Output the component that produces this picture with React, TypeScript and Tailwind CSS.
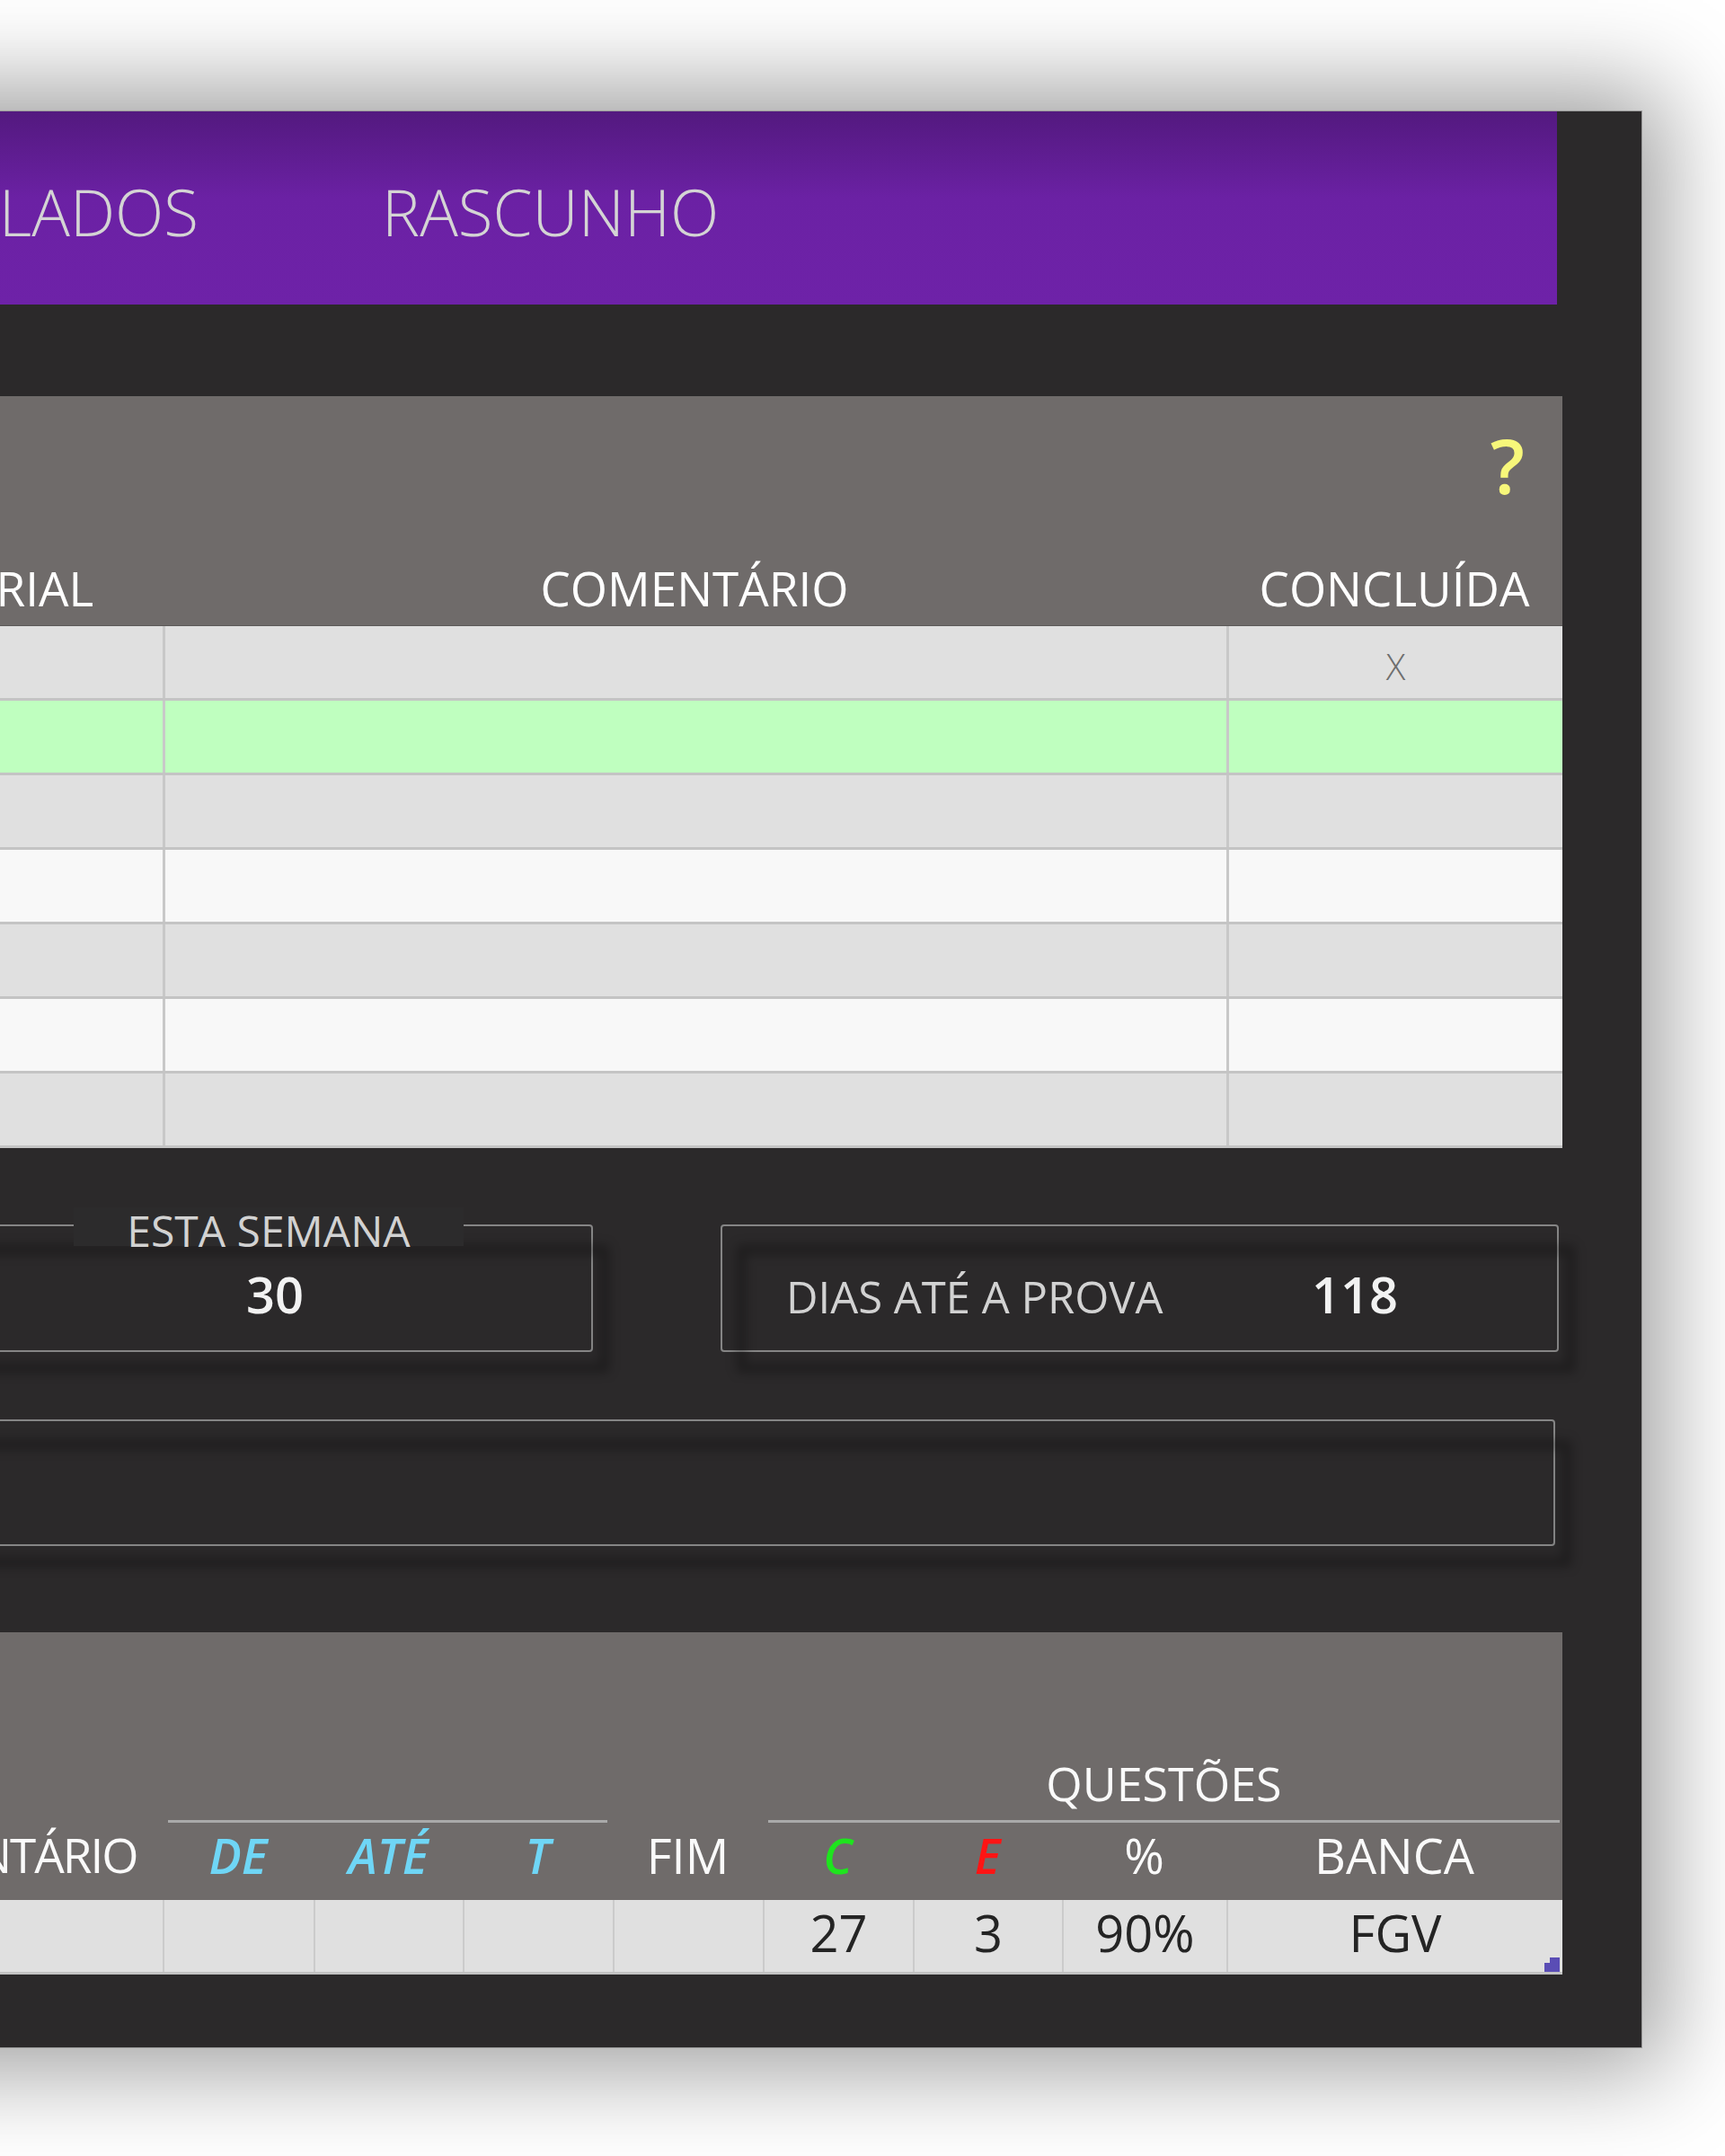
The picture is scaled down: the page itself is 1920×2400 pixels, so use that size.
import React from 'react';

const rowColors = [
  'bg-[#e0e0e0]',
  'bg-[#bfffbf]',
  'bg-[#e0e0e0]',
  'bg-[#f8f8f8]',
  'bg-[#e0e0e0]',
  'bg-[#f8f8f8]',
  'bg-[#e0e0e0]',
];

const tasksCols = 'grid grid-cols-[1fr_402px_1184px_374px]';
const logCols = 'grid grid-cols-[1fr_394px_168px_166px_167px_167px_167px_166px_183px_374px]';

// blurred outline that sits down-right of a framed box
const ShadowFrame: React.FC = () => (
  <div
    aria-hidden
    className="pointer-events-none absolute -inset-[2px] translate-x-[18px] translate-y-[23px] rounded-[4px] border-[10px] border-black/30 blur-[6px]"
  />
);

const App: React.FC = () => {
  return (
    <div className="h-[2400px] w-[1920px] overflow-hidden bg-white pt-[123px] font-['Open_Sans','Noto_Sans',sans-serif]">
      <div className="ml-[-700px] flex w-[2528px] flex-col border-t border-r border-b border-[#9a9a9a] bg-[#2b292a] pb-[81px] shadow-[0_0_100px_25px_rgba(0,0,0,0.38)]">
        {/* tabs */}
        <div className="mr-[94px] flex h-[215px] bg-linear-to-b from-[#53197f] via-[#6b21a4] via-45% to-[#6e22a8] pt-[76px] text-[71px] font-light leading-none text-[#d4d4d4]">
          <div className="w-[921px] text-right">SIMULADOS</div>
          <div className="ml-[204px]">RASCUNHO</div>
        </div>

        {/* tasks */}
        <div className="mr-[88px] mt-[102px] bg-[#6f6b6a]">
          <div className="flex justify-end pr-[42px] pt-[35px]">
            <span className="text-[84px] font-semibold leading-none text-[#f7f77a]">?</span>
          </div>
          <div className={`${tasksCols} pt-[68px] pb-[15px] text-center text-[53px] leading-none text-white`}>
            <div>DISCIPLINA</div>
            <div>MATERIAL</div>
            <div>COMENTÁRIO</div>
            <div>CONCLUÍDA</div>
          </div>
          <div className="border-t border-[#5d5a59]">
            {rowColors.map((bg, i) => (
              <div key={i} className={`${tasksCols} h-[83px] border-b-[3px] border-[#c4c4c4] ${bg}`}>
                <div />
                <div className="border-l-[3px] border-[#c8c8c8]" />
                <div className="border-l-[3px] border-[#c8c8c8]" />
                <div className="flex items-center justify-center border-l-[3px] border-[#c8c8c8] pt-[10px] text-[40px] font-light leading-none text-[#6e6e6e]">
                  {i === 0 ? 'X' : ''}
                </div>
              </div>
            ))}
          </div>
        </div>

        {/* counters */}
        <div className="mt-[85px] flex justify-end gap-[142px] pr-[92px]">
          <div className="relative h-[142px] w-[720px] rounded-[4px] border-2 border-[#858585]">
            <ShadowFrame />
            <div className="absolute left-[140px] -top-[21px] z-10 h-[43px] w-[434px] bg-[#2c2b2c] pt-[2px] text-center text-[48px] leading-none text-[#d2d2d2]">
              ESTA SEMANA
            </div>
            <div className="flex justify-center pl-[12px] pt-[47px] text-[56px] font-semibold leading-none text-[#f2f2f2]">
              30
            </div>
          </div>
          <div className="relative flex h-[142px] w-[933px] items-baseline rounded-[4px] border-2 border-[#858585] pl-[71px] pt-[47px] leading-none">
            <ShadowFrame />
            <span className="w-[585px] text-[49px] text-[#d2d2d2]">DIAS ATÉ A PROVA</span>
            <span className="text-[56px] font-semibold text-[#f2f2f2]">118</span>
          </div>
        </div>

        {/* notes box */}
        <div className="relative ml-[20px] mr-[96px] mt-[75px] h-[141px] rounded-[4px] border-2 border-[#858585]">
          <ShadowFrame />
        </div>

        {/* study log */}
        <div className="mr-[88px] mt-[96px] bg-[#6f6b6a] pt-[142px] text-[#fafafa]">
          <div className={logCols}>
            <div className="col-span-3 col-start-3 mx-[6px] border-b-[3px] border-[#a9a9a9]" />
            <div className="col-span-4 col-start-7 ml-[6px] mr-[3px] border-b-[3px] border-[#a9a9a9] pb-[15px] text-center text-[52px] leading-none">
              QUESTÕES
            </div>
          </div>
          <div className={`${logCols} pt-[9px] pb-[23px] text-center text-[54px] leading-none`}>
            <div>DATA</div>
            <div className="whitespace-nowrap pl-[14px] text-[53px] tracking-[-2px]">COMENTÁRIO</div>
            <div className="font-semibold italic text-[#6fd6f6]">DE</div>
            <div className="font-semibold italic text-[#6fd6f6]">ATÉ</div>
            <div className="font-semibold italic text-[#6fd6f6]">T</div>
            <div>FIM</div>
            <div className="font-semibold italic text-[#1ee41e]">C</div>
            <div className="font-semibold italic text-[#ff1414]">E</div>
            <div>%</div>
            <div>BANCA</div>
          </div>
          <div className={`${logCols} h-[83px] border-b-[3px] border-[#c2c2c2] bg-[#e0e0e0] text-[56px] leading-none text-[#242424]`}>
            <div />
            <div className="border-l-2 border-[#cbcbcb]" />
            <div className="border-l-2 border-[#cbcbcb]" />
            <div className="border-l-2 border-[#cbcbcb]" />
            <div className="border-l-2 border-[#cbcbcb]" />
            <div className="border-l-2 border-[#cbcbcb]" />
            <div className="flex items-center justify-center border-l-2 border-[#cbcbcb] pb-[8px]">27</div>
            <div className="flex items-center justify-center border-l-2 border-[#cbcbcb] pb-[8px]">3</div>
            <div className="flex items-center justify-center border-l-2 border-[#cbcbcb] pb-[8px]">90%</div>
            <div className="relative flex items-center justify-center border-l-2 border-[#cbcbcb] pb-[8px]">
              FGV
              <svg className="absolute bottom-0 right-[3px]" width="17" height="16" viewBox="0 0 17 16">
                <polygon points="6,0 17,0 17,16 0,16 0,6 6,6" fill="#5a4db5" />
              </svg>
            </div>
          </div>
        </div>
      </div>
    </div>
  );
};

export default App;
